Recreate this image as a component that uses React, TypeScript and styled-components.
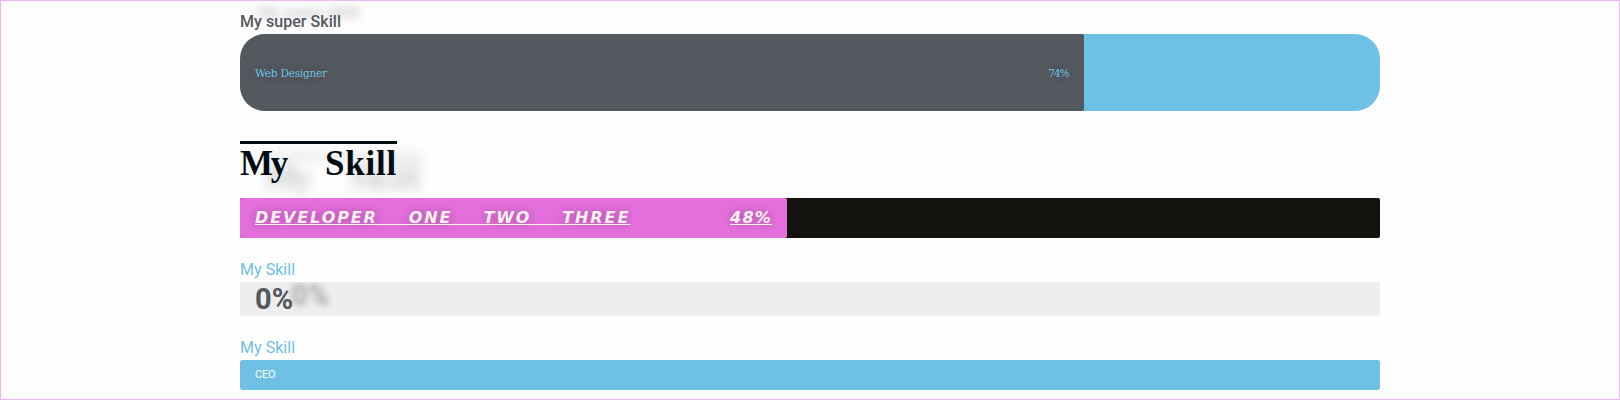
import React, { Fragment } from "react";
import styled, { createGlobalStyle, css } from "styled-components";

const GlobalStyle = createGlobalStyle`
  * { box-sizing: border-box; }
  body { margin: 0; background: #fefefe; }
`;

type Look = "slab" | "fancy" | "bold" | "plain";

const Page = styled.main`
  height: 400px;
  border: 1px solid #edb5f8;
  display: flex;
  justify-content: center;
  overflow: hidden;
  font-family: Roboto, "Liberation Sans", sans-serif;
`;

const SkillList = styled.div`
  width: 1140px;
  display: flex;
  flex-direction: column;
`;

const Skill = styled.section`
  display: flex;
  flex-direction: column;
  align-items: flex-start;
`;

const titleLooks = {
  slab: css`
    height: 33px;
    padding-top: 11px;
    color: #54595f;
    font-weight: 500;
    text-shadow: 18px -9px 10px rgba(0, 0, 0, 0.25);
  `,
  fancy: css`
    height: 87px;
    padding-top: 34px;
    color: #020d12;
    font: 700 35px/38px "Liberation Serif", serif;
    word-spacing: 30.25px;
    text-decoration: overline 3px;
    text-shadow: 24px 14px 12px rgba(0, 0, 0, 0.22);
  `,
  bold: css`
    height: 44px;
    padding-top: 22px;
    color: #6ec1e4;
  `,
  plain: css`
    height: 44px;
    padding-top: 22px;
    color: #6ec1e4;
  `,
};

const Title = styled.h2<{ $look: Look }>`
  margin: 0;
  font-size: 16px;
  font-weight: 400;
  line-height: 19px;
  letter-spacing: 0.05px;
  white-space: nowrap;
  ${({ $look }) => titleLooks[$look]}
  ${({ $look }) => $look === "fancy" && "letter-spacing: 0;"}
`;

const Word = styled.span<{ $tracking: number }>`
  letter-spacing: ${({ $tracking }) => $tracking}px;
`;

const Track = styled.div<{ $height: number; $color: string; $radius: number }>`
  width: 100%;
  height: ${({ $height }) => $height}px;
  background: ${({ $color }) => $color};
  border-radius: ${({ $radius }) => $radius}px;
  overflow: hidden;
`;

const fillLooks = {
  slab: css`
    color: #6ec1e4;
    font: 400 10.5px/16px "DejaVu Serif", serif;
    text-shadow: 0 0 10px rgba(0, 0, 0, 0.3);
  `,
  fancy: css`
    padding-bottom: 1px;
    color: #fff0f0;
    font: italic 700 16px/20px "DejaVu Sans", sans-serif;
    word-spacing: 23.5px;
    text-decoration: underline 1px;
    text-underline-offset: 1px;
    text-decoration-skip-ink: none;
    text-shadow: 0 0 10px rgba(0, 0, 0, 0.3);
  `,
  bold: css`
    color: #54595f;
    font-size: 29px;
    font-weight: 700;
    line-height: 34px;
    text-shadow: 36px -4px 6px rgba(0, 0, 0, 0.3);
  `,
  plain: css`
    color: #fff;
    font-size: 11px;
    line-height: 28px;
  `,
};

const Fill = styled.div<{ $look: Look; $percent: number; $color: string }>`
  width: ${({ $percent }) => $percent}%;
  height: 100%;
  padding: 0 15px;
  display: flex;
  align-items: center;
  justify-content: space-between;
  border-radius: 2px;
  background: ${({ $color }) => $color};
  white-space: nowrap;
  ${({ $look }) => fillLooks[$look]}
`;

const Label = styled.span<{ $tracking?: number }>`
  display: block;
  letter-spacing: ${({ $tracking = 0 }) => $tracking}px;
`;

interface SkillData {
  look: Look;
  title: string;
  wordTracking?: number[];
  label?: string;
  labelTracking?: number;
  value?: string;
  valueTracking?: number;
  percent: number;
  height: number;
  radius: number;
  track: string;
  fill: string;
}

const skills: SkillData[] = [
  { look: "slab", title: "My super Skill", label: "Web Designer", labelTracking: -0.2, value: "74%", valueTracking: -1, percent: 74, height: 77, radius: 25, track: "#6ec1e4", fill: "#54595f" },
  { look: "fancy", title: "My Skill", wordTracking: [-2.27, 0.8], label: "DEVELOPER ONE TWO THREE", labelTracking: 1.9, value: "48%", valueTracking: 1.3, percent: 48, height: 40, radius: 2, track: "#12120f", fill: "#e46fdc" },
  { look: "bold", title: "My Skill", value: "0%", percent: 0, height: 34, radius: 2, track: "#eeeeee", fill: "transparent" },
  { look: "plain", title: "My Skill", label: "CEO", labelTracking: -0.2, percent: 100, height: 30, radius: 2, track: "#eeeeee", fill: "#6ec1e4" },
];

function TitleText({ text, tracking }: { text: string; tracking?: number[] }) {
  if (!tracking) return <>{text}</>;
  return (
    <>
      {text.split(" ").map((word, i) => (
        <Fragment key={word}>
          {i > 0 && " "}
          <Word $tracking={tracking[i]}>{word}</Word>
        </Fragment>
      ))}
    </>
  );
}

export default function App() {
  return (
    <>
      <GlobalStyle />
      <Page>
        <SkillList>
          {skills.map((s) => (
            <Skill key={s.look}>
              <Title $look={s.look}>
                <TitleText text={s.title} tracking={s.wordTracking} />
              </Title>
              <Track $height={s.height} $color={s.track} $radius={s.radius}>
                <Fill $look={s.look} $percent={s.percent} $color={s.fill}>
                  {s.label && <Label $tracking={s.labelTracking}>{s.label}</Label>}
                  {s.value && <Label $tracking={s.valueTracking}>{s.value}</Label>}
                </Fill>
              </Track>
            </Skill>
          ))}
        </SkillList>
      </Page>
    </>
  );
}
